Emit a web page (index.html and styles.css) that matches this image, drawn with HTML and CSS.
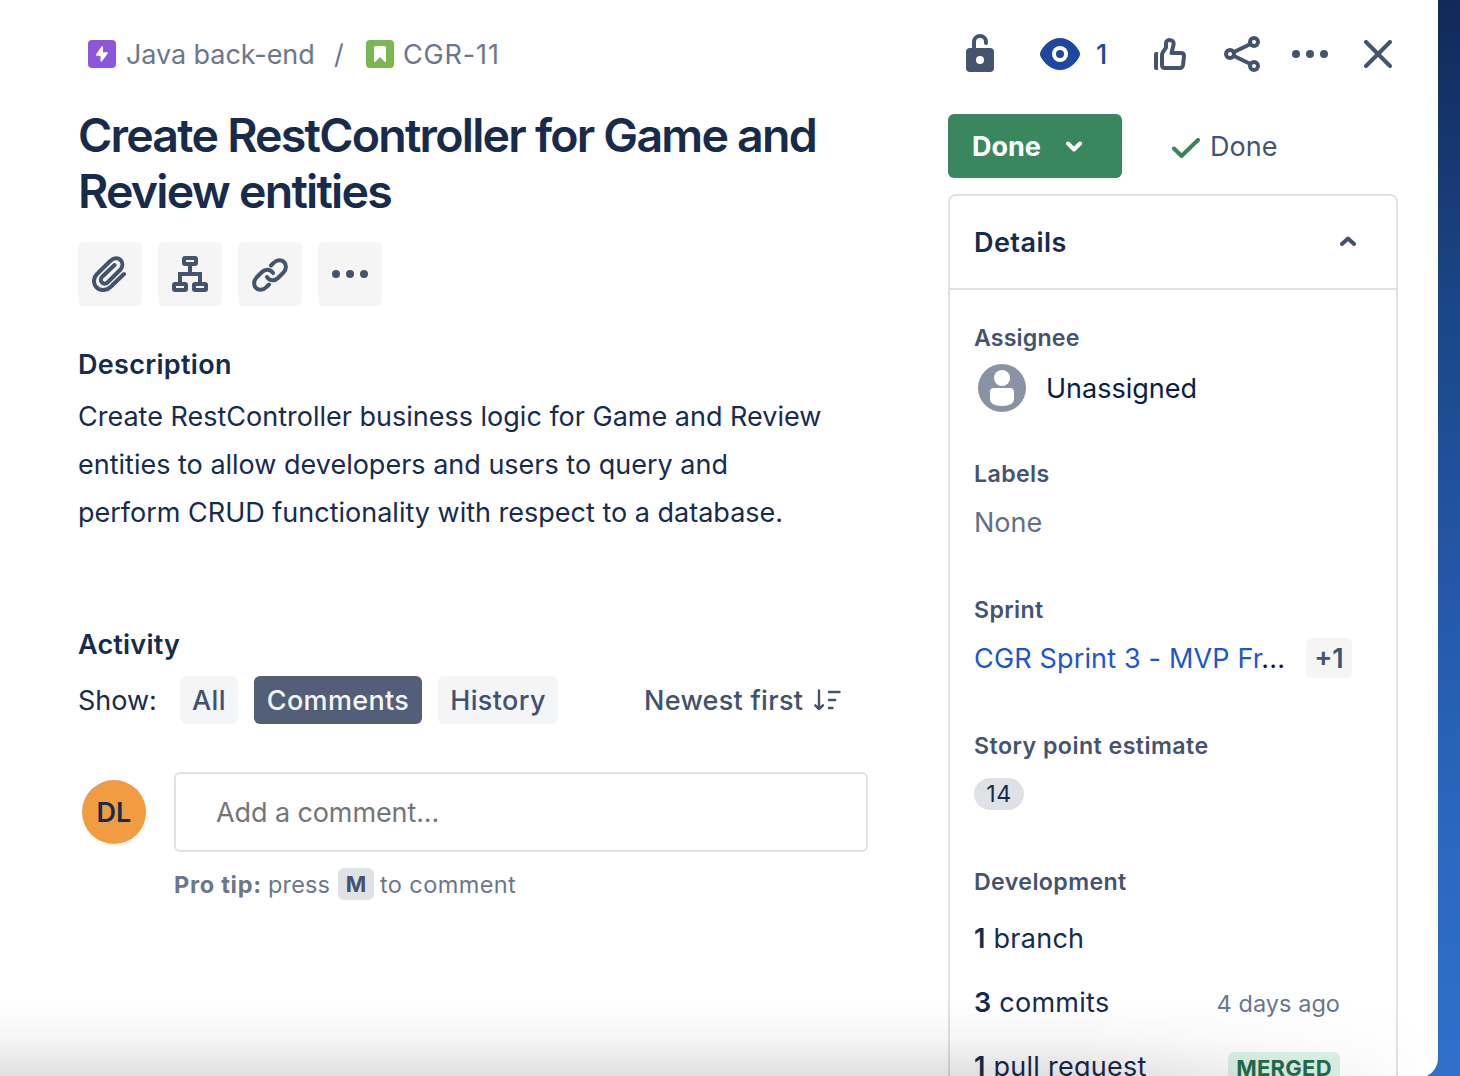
FILE: index.html
```html
<!DOCTYPE html>
<html lang="en">
<head>
<meta charset="utf-8">
<title>CGR-11</title>
<link rel="stylesheet" href="styles.css">
</head>
<body>
<div class="modal">
  <main class="issue">
    <nav class="crumbs">
      <svg class="type-icon" viewBox="0 0 28 28"><rect width="28" height="28" rx="4" fill="#8a56dc"/><path d="M13.400 6.500 8 14.500q-.5 1.200.7 1.200h3.800v5.300q.5 1.400 1.500.3l5.700-7.800q.5-1.200-.7-1.200h-4V6.800q-.4-1.300-1.600-.3z" fill="#fff"/></svg>
      <span class="crumb crumb-epic">Java back-end</span>
      <span class="crumb crumb-sep">/</span>
      <svg class="type-icon" viewBox="0 0 28 28"><rect width="28" height="28" rx="4" fill="#7ab751"/><path d="M8 7.500q0-1.500 1.500-1.500h9q1.500 0 1.500 1.500V21.400q-.4 1-1.300.3L14 17l-4.700 4.700q-1 .7-1.300-.3z" fill="#fff"/></svg>
      <span class="crumb crumb-key">CGR-11</span>
    </nav>
    <h1 class="title">Create RestController for Game and<br>Review entities</h1>
    <div class="tools">
      <button class="tool"><svg width="36" height="36" viewBox="0 0 36 36" class="line"><path d="M32 18 18.500 31C14.500 35 8 35 4.600 31.500 1 28 1 22 5 18L18.500 4.800C21.500 1.500 26 1.500 28.500 4s2.500 6.500 0 9.500L15.500 26.500c-1.500 1.500-4 1.500-5.500 0s-1.500-4 0-5.500L22.500 9"/></svg></button>
      <button class="tool"><svg width="36" height="36" viewBox="0 0 36 36" class="line"><rect x="12" y="2" width="12" height="6" rx="1"/><rect x="2" y="28" width="12" height="6" rx="1"/><rect x="22" y="28" width="12" height="6" rx="1"/><path stroke-linecap="butt" stroke-linejoin="miter" d="M8 27V18H28V27M18 9V18"/></svg></button>
      <button class="tool"><svg width="36" height="34" viewBox="0 0 36 34" class="line link-icon"><path d="M19 7.500 21.500 5C25 1.300 29.500 1.500 32 4s2.700 7-.5 10.500L26 20C22.500 23.500 17.500 23 15 19M17 26.500 14.500 29C11 32.700 6.500 32.500 4 30S1.300 23 4.500 19.500L10 14C13.500 10.500 18.500 11 21 15"/></svg></button>
      <button class="tool"><svg width="36" height="8" viewBox="0 0 36 8" class="solid"><circle cx="4" cy="4" r="4"/><circle cx="18" cy="4" r="4"/><circle cx="32" cy="4" r="4"/></svg></button>
    </div>
    <h2 class="heading">Description</h2>
    <p class="text">Create RestController business logic for Game and Review<br>entities to allow developers and users to query and<br>perform CRUD functionality with respect to a database.</p>
    <h2 class="heading heading-activity">Activity</h2>
    <div class="filters">
      <span class="filters-label">Show:</span>
      <button class="chip chip-all">All</button>
      <button class="chip chip-on">Comments</button>
      <button class="chip chip-history">History</button>
      <span class="sort">Newest first
        <svg width="27" height="22" viewBox="0 0 27 22" class="line sort-icon"><path d="M5 1.500V20M1.300 16.300 5 20.200 8.900 16.300M15 3H25.500M15 11H21.200M15 19H18.500"/></svg></span>
    </div>
    <div class="composer">
      <span class="avatar">DL</span>
      <div class="composer-box">Add a comment...</div>
    </div>
    <div class="tip"><b class="tip-title">Pro tip:</b><span class="tip-press">press</span><kbd class="key">M</kbd><span class="tip-rest">to comment</span></div>
  </main>
  <aside class="side">
    <div class="actions">
      <svg class="solid a-lock" width="28" height="38" viewBox="0 0 28 38"><rect y="14" width="28" height="24" rx="4"/><circle cx="14" cy="26" r="4" fill="#fff"/><path d="M8 15V8a6 6 0 0 1 12 0v1" fill="none" stroke="#44546f" stroke-width="4" stroke-linecap="round"/></svg>
      <svg class="a-eye" width="40" height="32" viewBox="0 0 40 32"><path d="M20 0C11 0 4 7 .8 13q-1.600 3 0 6C4 25 11 32 20 32s16-7 19.200-13q1.600-3 0-6C36 7 29 0 20 0z" fill="#1d47a1"/><circle cx="20" cy="16" r="8" fill="#fff"/><circle cx="20" cy="16" r="4" fill="#1d47a1"/></svg>
      <span class="watchers">1</span>
      <svg class="line a-thumb" width="32" height="32" viewBox="0 0 32 32"><path stroke="none" fill="#44546f" d="M2 14H4V32H2Q0 32 0 30V16Q0 14 2 14z"/><path d="M8 27V17Q8 15.500 9 14L12 9.500V5C12.500 1 19.700 1 19.700 6L17.500 15H27Q30 15 30 18L29 27Q28.500 30 26 30H11Q8 30 8 27z"/></svg>
      <svg class="line a-share" width="36" height="36" viewBox="0 0 36 36"><circle cx="6" cy="18" r="4"/><circle cx="30" cy="6" r="4"/><circle cx="30" cy="30" r="4"/><path d="M10 16 26.500 8M10 20 26.500 28"/></svg>
      <svg width="36" height="8" viewBox="0 0 36 8" class="solid a-more"><circle cx="4" cy="4" r="4"/><circle cx="18" cy="4" r="4"/><circle cx="32" cy="4" r="4"/></svg>
      <svg class="line" width="28" height="28" viewBox="0 0 28 28"><path d="M2 2 26 26M26 2 2 26"/></svg>
    </div>
    <div class="status">
      <button class="status-btn"><span class="status-name">Done</span><svg width="16" height="11" viewBox="0 0 16 11" class="line line-white"><path d="M2 2.500 8 8.500 14 2.500"/></svg></button>
      <span class="resolution"><svg width="28" height="20" viewBox="0 0 28 20" class="line line-green"><path d="M2 10.500 9.500 18 26 2"/></svg>Done</span>
    </div>
    <section class="details">
      <header class="details-head">Details<svg width="16" height="10" viewBox="0 0 16 10" class="line chevron-up"><path d="M2 8 8 2.500 14 8"/></svg></header>
      <div class="fields">
        <div class="field"><div class="label label-assignee">Assignee</div>
          <div class="value value-user"><svg class="nobody" width="48" height="48" viewBox="0 0 48 48"><circle cx="24" cy="24" r="24" fill="#8993a4"/><circle cx="24" cy="14" r="8" fill="#fff"/><path d="M12 28q0-4 4-4h16q4 0 4 4v7q0 7-12 7t-12-7z" fill="#fff"/></svg>Unassigned</div></div>
        <div class="field"><div class="label">Labels</div>
          <div class="value value-none">None</div></div>
        <div class="field"><div class="label">Sprint</div>
          <div class="value"><span class="sprint"><a class="link">CGR Sprint 3 - MVP Fr</a>...</span><span class="plus">+1</span></div></div>
        <div class="field"><div class="label label-points">Story point estimate</div>
          <div class="value"><span class="points">14</span></div></div>
        <div class="field field-dev"><div class="label">Development</div>
          <div class="dev"><span><b>1</b> branch</span></div>
          <div class="dev"><span><b>3</b> commits</span><span class="when">4 days ago</span></div>
          <div class="dev"><span><b>1</b> pull request</span><span class="merged">MERGED</span></div></div>
      </div>
    </section>
  </aside>
  <div class="fade"></div>
</div>
</body>
</html>
```
FILE: styles.css
```css
* { box-sizing: border-box; }
body {
  margin: 0;
  height: 1076px;
  overflow: hidden;
  background: linear-gradient(#11295b 0, #1a4485 290px, #2459a9 600px, #2b68c0 850px, #2f70cc 1076px);
  font-family: Inter, "Liberation Sans", sans-serif;
  font-size: 27px;
  color: #172b4d;
}
.modal {
  position: relative;
  display: flex;
  width: 1438px;
  height: 1078px;
  overflow: hidden;
  background: #fff;
  border-bottom-right-radius: 20px;
}
button { border: 0; padding: 0; font: inherit; color: inherit; }
svg { display: block; flex: none; }
h1, h2, p { margin: 0; }
h1, h2, p, span, b, a { white-space: nowrap; }
.line { fill: none; stroke: #44546f; stroke-width: 4; stroke-linecap: round; stroke-linejoin: round; }
.solid { fill: #44546f; }
.line-white { stroke: #fff; }
.line-green { stroke: #36845c; margin-top: 3px; }

.issue { width: 948px; padding: 40px 80px 0 78px; }
.crumbs { display: flex; align-items: center; height: 28px; padding-left: 10px; color: #6b778c; }
.type-icon { width: 28px; height: 28px; }
.crumb-epic { width: 208px; margin-left: 10px; letter-spacing: -.07px; }
.crumb-sep { width: 32px; }
.crumb-key { margin-left: 9px; letter-spacing: .85px; }
.title { margin-top: 39px; font-size: 46.500px; line-height: 56px; font-weight: 600; letter-spacing: -1.770px; }
.tools { display: flex; gap: 16px; margin-top: 23px; }
.tool { display: grid; place-items: center; width: 64px; height: 64px; border-radius: 6px; background: #f5f5f5; }
.link-icon { margin-top: 2px; }
.heading { margin-top: 39px; line-height: 40px; font-size: 27px; font-weight: 600; letter-spacing: .3px; }
.text { margin-top: 8px; line-height: 48px; }
.heading-activity { margin-top: 88px; letter-spacing: .2px; }
.filters { display: flex; align-items: center; height: 48px; margin-top: 11px; }
.filters-label { width: 102px; }
.chip { height: 48px; margin-right: 16px; border-radius: 6px; background: #f4f5f7; color: #42526e; font-weight: 500; letter-spacing: .35px; }
.chip-all { width: 58px; }
.chip-on { width: 168px; background: #535f78; color: #f4f5f7; }
.chip-history { width: 120px; }
.sort { display: flex; align-items: center; margin-left: 70px; color: #42526e; font-weight: 500; letter-spacing: .28px; }
.sort-icon { margin-left: 11px; stroke-width: 2.400; }
.composer { display: flex; align-items: center; margin-top: 48px; padding-left: 4px; width: 790px; }
.avatar { display: grid; place-items: center; width: 64px; height: 64px; margin-right: 28px; border-radius: 50%; background: #f29c42; font-weight: 600; }
.composer-box { display: flex; align-items: center; flex: 1; height: 80px; padding-left: 40px; border: 2px solid #dfe1e6; border-radius: 6px; color: #757575; letter-spacing: -.1px; }
.tip { display: flex; align-items: center; height: 32px; margin-top: 16px; padding-left: 96px; font-size: 23.500px; color: #6b778c; }
.tip-title { width: 94px; letter-spacing: .75px; }
.tip-press { width: 63px; letter-spacing: .15px; }
.tip-rest { letter-spacing: .4px; }
.key { display: grid; place-items: center; width: 36px; height: 32px; margin: 0 6px 0 7px; border-radius: 6px; background: #dfe1e5; color: #42526e; font: 700 22px/32px Inter, sans-serif; }

.side { width: 450px; }
.actions { display: flex; align-items: center; height: 40px; margin-top: 34px; padding-left: 18px; }
.a-lock { margin-right: 46px; align-self: flex-start; }
.watchers { width: 58px; margin-left: 16px; color: #1d47a1; font-weight: 500; }
.a-thumb { margin-right: 38px; }
.a-share { margin-right: 32px; }
.a-more { margin-right: 36px; }
.status { display: flex; align-items: center; margin-top: 40px; }
.status-btn { display: flex; align-items: center; width: 174px; height: 64px; padding-left: 24px; border-radius: 6px; background: #3a875f; color: #fff; font-weight: 700; text-align: left; }
.status-name { width: 94px; }
.resolution { display: flex; align-items: center; gap: 10px; margin-left: 50px; color: #44546f; }
.details { height: 900px; margin-top: 16px; border: 2px solid #dfe1e6; border-radius: 8px; }
.details-head { display: flex; align-items: center; justify-content: space-between; height: 94px; padding: 0 40px 0 24px; border-bottom: 2px solid #dfe1e6; font-weight: 600; letter-spacing: .45px; }
.chevron-up { margin-bottom: 2px; }
.fields { padding: 32px 24px 0; }
.field { height: 136px; }
.label { font-size: 23.200px; line-height: 32px; font-weight: 600; color: #44546f; letter-spacing: .37px; }
.label-assignee { letter-spacing: .15px; }
.label-points { letter-spacing: .45px; }
.value { display: flex; align-items: center; height: 64px; color: #091e42; }
.value-user { height: 68px; }
.value-none { color: #626f86; }
.nobody { margin: 0 20px 0 4px; }
.link { color: #1d55cc; }
.sprint { width: 332px; letter-spacing: .16px; }
.plus { display: grid; place-items: center; width: 46px; height: 40px; border-radius: 6px; background: #f5f5f5; color: #44546f; font-weight: 600; }
.points { display: grid; place-items: center; width: 50px; height: 32px; border-radius: 16px; background: #dfe1e6; color: #172b4d; font-size: 23.200px; letter-spacing: .5px; }
.dev { display: flex; align-items: center; justify-content: space-between; height: 64px; padding-right: 32px; letter-spacing: .26px; }
.field-dev .label { margin-bottom: 8px; }
.dev b { font-weight: 600; }
.when { padding-top: 3px; font-size: 23.500px; color: #6b778c; letter-spacing: .05px; }
.merged { display: grid; place-items: center; width: 112px; height: 32px; margin-top: 4px; border-radius: 6px; background: #dff3e8; color: #216e4e; font-size: 22px; font-weight: 700; }
.fade { position: absolute; inset: auto 0 0; height: 80px; background: linear-gradient(transparent, rgba(0,0,0,.035) 50%, rgba(0,0,0,.13)); -webkit-mask: linear-gradient(90deg, #000 75%, transparent); mask: linear-gradient(90deg, #000 75%, transparent); }
```
